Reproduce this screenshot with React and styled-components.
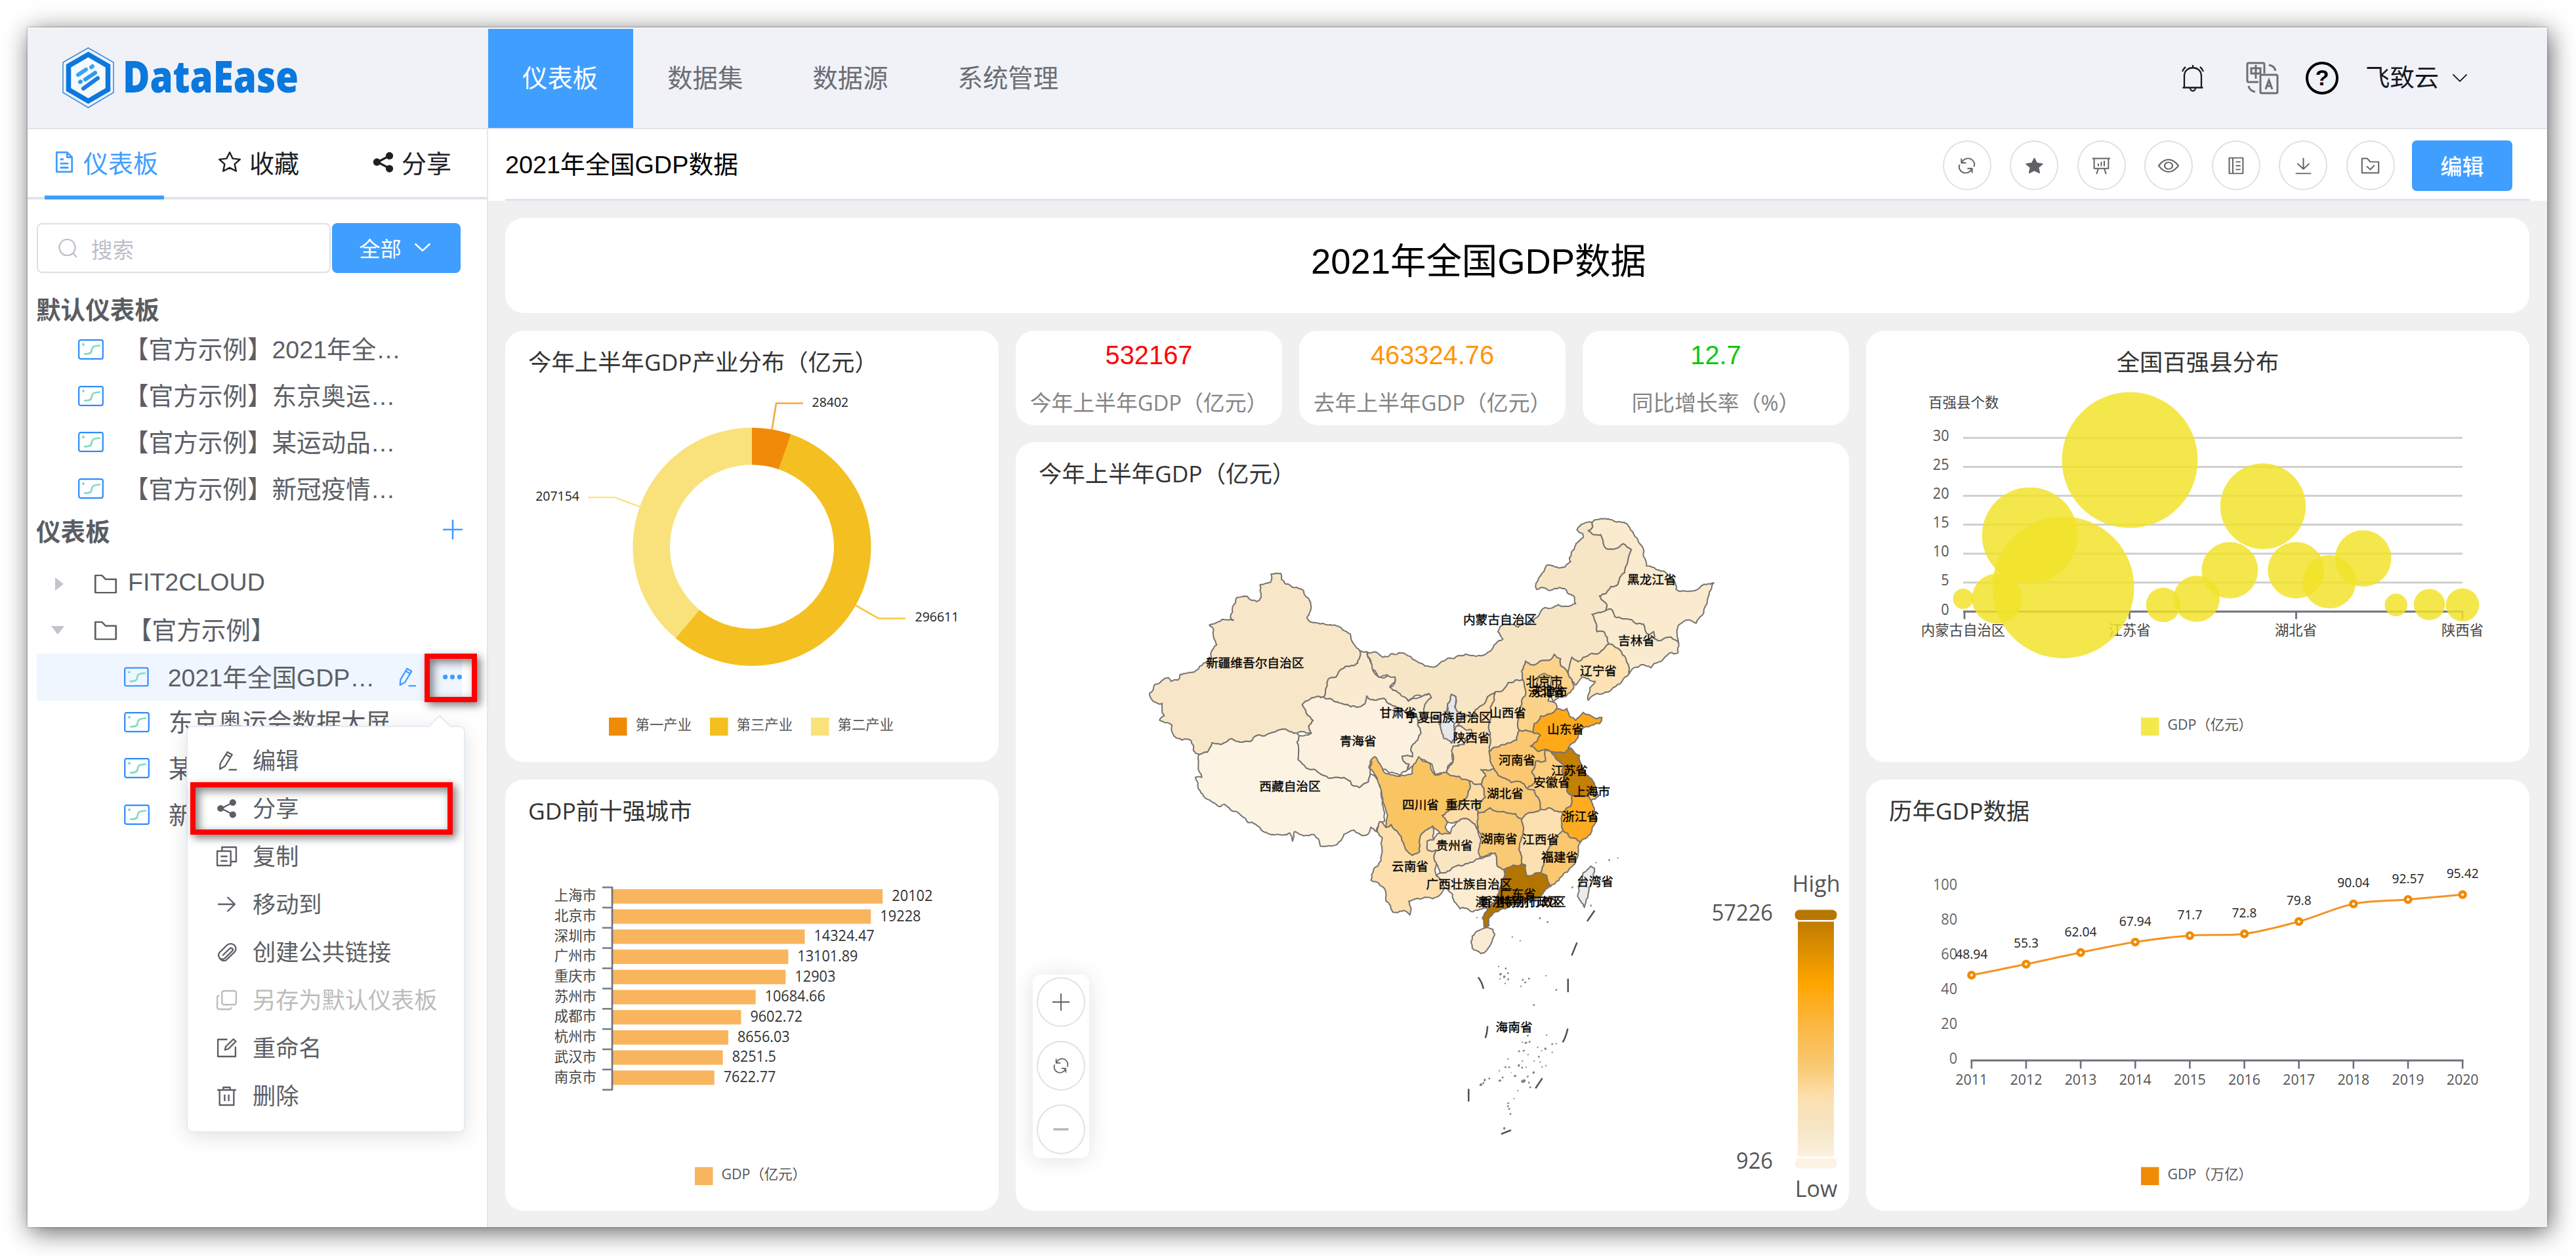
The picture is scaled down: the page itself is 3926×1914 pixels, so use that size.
import React from "react";
import styled, { createGlobalStyle, css } from "styled-components";

const UI_FONT = '"Liberation Sans", "Noto Sans CJK SC", sans-serif';
const CHART_FONT = '"Open Sans", "Noto Sans CJK SC", sans-serif';
const BLUE = "#409eff";

const GlobalStyle = createGlobalStyle`
  * { box-sizing: border-box; }
  body { margin: 0; background: #fff; font-family: ${UI_FONT}; color: #606266; }
`;

/* ---------- page frame ---------- */

const Page = styled.div`
  width: 3926px;
  height: 1914px;
  padding: 42px 44px 44px 42px;
  overflow: hidden;
  background: #fff;
`;

const Window = styled.div`
  position: relative;
  width: 3840px;
  height: 1828px;
  display: flex;
  flex-direction: column;
  background: #fff;
  box-shadow: 4px 7px 36px rgba(0, 0, 0, 0.62), 0 0 3px rgba(0, 0, 0, 0.35);
`;

const Header = styled.header`
  height: 155px;
  flex: none;
  display: flex;
  background: #f0f2f8;
  border-top: 2px solid #f7f8fb;
  border-bottom: 2px solid #e2e4e9;
`;

const Brand = styled.div`
  width: 702px;
  padding: 28px 0 0 53px;
`;

const Nav = styled.nav`
  display: flex;
  flex: 1;
`;

const NavItem = styled.a`
  padding: 0 54px 7px 52px;
  display: flex;
  align-items: center;
  font-size: 38.4px;
  color: ${(p) => (p.$active ? "#fff" : "#6b6e74")};
  background: ${(p) => (p.$active ? BLUE : "transparent")};
`;

const HeaderTools = styled.div`
  display: flex;
  align-items: center;
  padding: 0 120px 2px 0;
  color: #111;
`;

const UserName = styled.span`
  font-size: 37.3px;
  margin: 0 19px 5px 41px;
  color: #15181d;
`;

const Body = styled.div`
  flex: 1;
  display: flex;
  min-height: 0;
`;

/* ---------- sidebar ---------- */

const Sidebar = styled.aside`
  width: 702px;
  flex: none;
  border-right: 2px solid #e4e6ea;
  display: flex;
  flex-direction: column;
`;

const Tabs = styled.div`
  height: 107px;
  flex: none;
  display: flex;
  padding-left: 26px;
  border-bottom: 4px solid #dfe4ed;
`;

const Tab = styled.div`
  display: flex;
  align-items: center;
  gap: ${(p) => p.$gap}px;
  height: 107px;
  padding: 0 0 8px ${(p) => (p.$active ? 13 : 0)}px;
  width: ${(p) => p.$w}px;
  margin-left: ${(p) => p.$ml || 0}px;
  font-size: 38px;
  white-space: nowrap;
  color: ${(p) => (p.$active ? BLUE : "#1d2025")};
  ${(p) => p.$active && css`border-bottom: 6px solid ${BLUE}; padding-bottom: 2px;`}
`;

const SearchRow = styled.div`
  display: flex;
  gap: 2px;
  padding: 36px 0 0 14px;
`;

const SearchBox = styled.div`
  width: 448px;
  height: 76px;
  border: 2px solid #dcdfe6;
  border-radius: 8px;
  display: flex;
  align-items: center;
  gap: 20px;
  padding-left: 30px;
  font-size: 32.5px;
  color: #bcc0c9;
`;

const FilterButton = styled.button`
  width: 196px;
  height: 76px;
  border: 0;
  border-radius: 8px;
  background: ${BLUE};
  color: #fff;
  display: flex;
  align-items: center;
  justify-content: center;
  gap: 18px;
  padding: 0 9px 2px 6px;
  font: 400 32.3px ${UI_FONT};
`;

const GroupTitle = styled.div`
  height: ${(p) => p.$h}px;
  margin-top: ${(p) => p.$mt}px;
  padding: 0 36px 0 13px;
  display: flex;
  align-items: center;
  justify-content: space-between;
  font-size: 37.6px;
  font-weight: 700;
  color: #5a5d62;
  svg { color: ${BLUE}; }
`;

const Tree = styled.div`
  margin-top: ${(p) => p.$mt || 0}px;
`;

const Row = styled.div`
  height: ${(p) => (p.$selected ? 72 : 70.8)}px;
  margin-left: 14px;
  margin-bottom: ${(p) => (p.$selected ? -3 : 0)}px;
  width: 648px;
  padding-left: ${(p) => p.$indent}px;
  display: flex;
  align-items: center;
  font-size: 37.6px;
  color: #5c5f65;
  white-space: nowrap;
  background: ${(p) => (p.$selected ? "#eff6ff" : "transparent")};
`;

const CaretSlot = styled.span`
  display: flex;
  width: ${(p) => p.$w}px;
`;

const RowText = styled.span`
  margin-left: ${(p) => p.$gap}px;
  padding-bottom: 5px;
`;

const RowTools = styled.span`
  margin-left: 33px;
  display: flex;
  align-items: center;
  gap: 40px;
  color: ${BLUE};
`;

/* ---------- dropdown menu over the tree ---------- */

const Menu = styled.div`
  position: absolute;
  left: 242px;
  top: 1064px;
  width: 425px;
  height: 620px;
  padding-top: 14px;
  background: #fff;
  border: 2px solid #e4ebf5;
  border-radius: 9px;
  box-shadow: 0 6px 32px rgba(0, 0, 0, 0.12);
  &::before {
    content: "";
    position: absolute;
    top: -14px;
    left: 372px;
    width: 22px;
    height: 22px;
    background: #fff;
    border: 2px solid #e4ebf5;
    border-right: 0;
    border-bottom: 0;
    transform: rotate(45deg);
  }
`;

const MenuItem = styled.div`
  position: relative;
  height: 73px;
  padding-left: 43px;
  display: flex;
  align-items: center;
  gap: 23px;
  font-size: 35.2px;
  color: ${(p) => (p.$disabled ? "#bcbcbc" : "#5c5f65")};
  span { padding-bottom: 5px; }
`;

const Marker = styled.div`
  position: absolute;
  left: ${(p) => p.$x}px;
  top: ${(p) => p.$y}px;
  width: ${(p) => p.$w}px;
  height: ${(p) => p.$h}px;
  border: 8px solid #fe0000;
  box-shadow: 5px 5px 12px rgba(0, 0, 0, 0.5), inset 5px 5px 14px rgba(0, 0, 0, 0.5);
`;

/* ---------- main area ---------- */

const Main = styled.main`
  flex: 1;
  display: flex;
  flex-direction: column;
  background: #f0f0f0;
`;

const Toolbar = styled.div`
  height: 109px;
  flex: none;
  background: #fff;
  padding: 0 26px;
`;

const ToolbarInner = styled.div`
  height: 109px;
  border-bottom: 3px solid #dfe4ed;
  display: flex;
  align-items: center;
  justify-content: space-between;
  padding: 4px 27px 0 0;
`;

const PageName = styled.span`
  font-size: 37.8px;
  color: #000;
  padding-bottom: 9px;
`;

const ToolButtons = styled.div`
  display: flex;
  align-items: center;
  gap: 28.5px;
`;

const RoundButton = styled.button`
  width: 74px;
  height: 76px;
  padding: 0;
  border: 2px solid #dfe1e8;
  border-radius: 50%;
  background: #fff;
  display: flex;
  align-items: center;
  justify-content: center;
  color: ${(p) => (p.$light ? "#b5b7bb" : "#606266")};
`;

const EditButton = styled.button`
  width: 153px;
  height: 77px;
  margin-left: -2px;
  border: 0;
  border-radius: 7px;
  background: ${BLUE};
  color: #fff;
  font: 500 33px ${UI_FONT};
`;

const Board = styled.div`
  flex: 1;
  padding: 26px 27px 26px 26px;
  display: flex;
  flex-direction: column;
  gap: 27px;
`;

const cardLook = css`
  background: #fff;
  border-radius: 28px;
`;

const TitleCard = styled.div`
  ${cardLook}
  height: 145px;
  padding: 0 118px 23px 0;
  display: flex;
  align-items: center;
  justify-content: center;
  font-size: 54.4px;
  color: #000;
`;

const Columns = styled.div`
  flex: 1;
  display: grid;
  grid-template-columns: 752px 1270px 1011px;
  gap: 26px;
`;

const Column = styled.div`
  display: flex;
  flex-direction: column;
  gap: ${(p) => p.$gap || 27}px;
`;

const Card = styled.section`
  ${cardLook}
  position: relative;
  flex: 1;
  display: flex;
  flex-direction: column;
  overflow: hidden;
  svg { display: block; }
`;

const CardTitle = styled.h3`
  margin: 0;
  height: 90px;
  flex: none;
  padding: 0 35px;
  font: 400 35.4px/94px ${CHART_FONT};
  color: #333;
  text-align: ${(p) => (p.$center ? "center" : "left")};
`;

const KpiRow = styled.div`
  display: grid;
  grid-template-columns: repeat(3, 406px);
  gap: 26px;
`;

const Kpi = styled.div`
  ${cardLook}
  height: 144px;
  display: flex;
  flex-direction: column;
  align-items: center;
`;

const KpiValue = styled.div`
  margin-top: 14px;
  font-size: 39.8px;
  line-height: 46px;
  color: ${(p) => p.$color};
`;

const KpiLabel = styled.div`
  margin-top: 24px;
  font: 400 32.8px/52px ${CHART_FONT};
  color: #858585;
`;

const ZoomPanel = styled.div`
  position: absolute;
  left: 26px;
  top: 811px;
  width: 86px;
  height: 280px;
  border-radius: 13px;
  background: #fff;
  box-shadow: 0 2px 34px rgba(0, 0, 0, 0.12);
  display: flex;
  flex-direction: column;
  align-items: center;
  justify-content: space-between;
  padding: 4px 0 6px;
`;

/* ---------- icons ---------- */

const ICONS = {
  doc: <path d="M5 2h15l7 7v21H5zM20 2v7h7M10 12h5M10 18h12M10 24h12" />,
  star: <path d="M16 2l4.200 9 9.800 1.200-7.200 6.800 1.900 9.900L16 24.100 7.300 28.900l1.900-9.900L2 12.200 11.800 11z" />,
  starFill: <path fill="currentColor" d="M16 3l4 8.600 9.400 1.200-6.900 6.500 1.800 9.400L16 24.100 7.700 28.700l1.800-9.400-6.900-6.500L12 11.600z" />,
  share: (
    <g>
      <path d="M8 16L25 7M8 16l17 9" />
      <circle cx="25" cy="7" r="3.800" fill="currentColor" />
      <circle cx="25" cy="25.500" r="3.800" fill="currentColor" />
      <circle cx="7" cy="16" r="3.800" fill="currentColor" />
    </g>
  ),
  search: <path d="M15 2a12.500 12.500 0 1 0 .01 0M24.500 23.500L29.500 30" />,
  down: <path d="M3 9l13 13L29 9" />,
  plus: <path d="M16 1v30M1 16h30" />,
  minus: <path d="M3 16h26" />,
  folder: <path d="M2 3h9l5 6h14v21H2z" />,
  pencil: <path d="M6.500 20.500L17 3l7 4-10.500 17.500L6 29zM15 7l7 4M19 30h12" />,
  dots: (
    <g fill="currentColor" stroke="none">
      <circle cx="4" cy="16" r="4" /><circle cx="16" cy="16" r="4" /><circle cx="28" cy="16" r="4" />
    </g>
  ),
  copy: <path d="M2 8h20v22H2zM9 8V2h21v22h-8M7 16h10M7 23h10" />,
  right: <path d="M3 16h25M17 5l11 11-11 11" />,
  clip: <path d="M10 21L20.500 10.500a2.600 2.600 0 0 1 3.700 3.700L13.500 25a5.600 5.600 0 0 1-7.900 0M5.600 25a6.500 6.500 0 0 1 0-8.800L16.500 5.300a7.600 7.600 0 0 1 10.800 10.800L15 28.300a6.800 6.800 0 0 1-9.400-3.300M10 21a2 2 0 0 0 0 .1" />,
  copies: <path d="M12 2h15a3 3 0 0 1 3 3v15a3 3 0 0 1-3 3H12a3 3 0 0 1-3-3V5a3 3 0 0 1 3-3zM5 9a3 3 0 0 0-3 3v15a3 3 0 0 0 3 3h15a3 3 0 0 0 3-3" />,
  rename: <path d="M17 3H3v26h26V14M13.500 19l1-5L26 2.500l3.500 3.500L18.500 17.500z" />,
  trash: <path d="M2 7h28M11 7V3h10v4M5.500 7v23h21V7M13 14v10M19 14v10" />,
  refresh: <path d="M8 9.500A10.500 10.500 0 0 1 28 18M7 3v8h8M24 22.500A10.500 10.500 0 0 1 4 14M25 29v-8h-8" />,
  board: <path d="M1 3h30M4 3v18h24V3M11 21L8 31M21 21l3 10M11 12v5M16 9v8M21 7v10" />,
  eye: (
    <g>
      <path d="M1 16C6 8 11 5 16 5s10 3 15 11c-5 8-10 11-15 11S6 24 1 16z" />
      <circle cx="16" cy="16" r="6" />
    </g>
  ),
  notebook: <path d="M5 2h23v28H5zM11 2v28M16 9h8M16 16h8M16 23h8" />,
  download: <path d="M16 2v20M6 12l10 10 10-10M3 30h26" />,
  folderCheck: <path d="M2 3h9l5 6h14v20H2zM10 17l6 6 7-8" />,
};

const Icon = ({ name, size = 30, h, sw = 2.2 }) => (
  <svg width={size} height={h || size} viewBox="0 0 32 32" preserveAspectRatio="none" fill="none"
    stroke="currentColor" strokeWidth={sw} strokeLinejoin="round" flex="none">
    {ICONS[name]}
  </svg>
);

const PanelIcon = () => (
  <svg width="39" height="31" viewBox="0 0 39 31" fill="none">
    <rect x="1.200" y="1.200" width="36.600" height="28.600" rx="2.500" stroke="#2f8bfa" strokeWidth="2.200" />
    <circle cx="8" cy="8" r="1.900" fill="#73dcbc" />
    <path d="M9 22.500c5 0 11 0 11.500-4.500C21 12 22 10 34 9.500" stroke="#7fdcc2" strokeWidth="2.600" />
  </svg>
);

const Caret = ({ open }) => (
  <svg width="22" height="22" viewBox="0 0 22 22">
    <path d={open ? "M1 5h20L11 18z" : "M5 1v20l13-10z"} fill="#c0c4cc" />
  </svg>
);

const BellIcon = () => (
  <svg width="36" height="44" viewBox="0 0 36 44" fill="none" stroke="#15181d" strokeWidth="2.300">
    <path d="M5 36V19C5 2 31 2 31 19v17M2.500 36.500h31M14 37c0 6 8 6 8 0M18 2v4M7 5c-2.500 2-4 4-5 7M29 5c2.500 2 4 4 5 7" />
  </svg>
);

const LangIcon = () => (
  <svg width="50" height="50" viewBox="0 0 50 50" fill="none" stroke="#6b6f75" strokeWidth="3">
    <path d="M19 31H4a2 2 0 0 1-2-2V4a2 2 0 0 1 2-2h22a2 2 0 0 1 2 2v14" />
    <rect x="22" y="20" width="26" height="28" rx="2" />
    <path d="M8 10h14v8H8zM15 5v21M30 42l5-14 5 14M32 37h7M35 5c6 1 9 4 10 9M14 46c-6-1-9-4-10-9" />
  </svg>
);

const HelpMark = styled.span`
  width: 50px;
  height: 50px;
  margin-left: 41px;
  border: 4px solid #000;
  border-radius: 50%;
  color: #000;
  font: 700 34px/41px ${UI_FONT};
  text-align: center;
`;

const BellSlot = styled.span`
  display: flex;
  margin-right: 63px;
`;

const Logo = () => (
  <svg width="370" height="96" viewBox="0 0 370 96" overflow="visible">
    <path d="M39.500 1L78 23v46L39.500 92 1 69V23z" fill="none" stroke="#3f8fdd" strokeWidth="1.600" />
    <path d="M39.500 11L69.500 28.500v36L39.500 82 9.500 64.500v-36z" fill="#f6f9fe" stroke="#0a78dd" strokeWidth="7.500" />
    <g strokeLinecap="round" strokeWidth="6">
      <path d="M24 42l12-8M44 30.500l2-1.500" stroke="#35a7f5" />
      <path d="M35 49l15-10" stroke="#2e9bf0" />
      <path d="M27 53l1-.7" stroke="#2e9bf0" />
      <path d="M32 63l22-16" stroke="#1680e0" />
    </g>
    <text x="92" y="69" textLength="268" lengthAdjust="spacingAndGlyphs" fontFamily='"Open Sans", sans-serif'
      fontWeight="800" fontSize="67" fill="#0a78dd">DataEase</text>
  </svg>
);

/* ---------- chart helpers ---------- */

const CjkText = ({ x, y, size = 21.4, anchor = "middle", fill = "#444", stroke, children }) => (
  <text x={x} y={y + size * 0.36} fontSize={size} textAnchor={anchor} fill={fill} stroke={stroke} strokeWidth="0.35"
    fontFamily={CHART_FONT}>{children}</text>
);

const numWidth = (s, size) => [...s].reduce((a, c) => a + (c === "." ? 0.217 : 0.541), 0) * size;

const NumText = ({ x, y, size = 22.6, anchor = "middle", fill = "#444", children }) => {
  const s = String(children);
  return (
    <text x={x} y={y + size * 0.34} fontSize={size} textAnchor={anchor} fill={fill} fontFamily={CHART_FONT}
      textLength={numWidth(s, size)} lengthAdjust="spacingAndGlyphs">{s}</text>
  );
};

const Legend = ({ x, y, color, label }) => (
  <g>
    <rect x={x} y={y - 13.5} width="27.500" height="27.500" fill={color} />
    <CjkText x={x + 40.500} y={y - 2.500} size={21.4} anchor="start" fill="#555">{label}</CjkText>
  </g>
);

/* ---------- donut ---------- */

const arc = (a0, a1, R = 181.5, r = 125, cx = 1146, cy = 832.7) => {
  const p = (a, q) => `${cx + q * Math.sin(a)} ${cy - q * Math.cos(a)}`;
  const big = a1 - a0 > Math.PI ? 1 : 0;
  return `M${p(a0, R)}A${R} ${R} 0 ${big} 1 ${p(a1, R)}L${p(a1, r)}A${r} ${r} 0 ${big} 0 ${p(a0, r)}Z`;
};

const Donut = () => {
  const parts = [[28402, "#f08b07"], [296611, "#f4bf20"], [207154, "#f9e27c"]];
  const total = 532167;
  let a = 0;
  return (
    <svg width="752" height="567" viewBox="770 593.500 752 567">
      {parts.map(([v, c]) => {
        const from = a;
        a += (v / total) * Math.PI * 2;
        return <path key={v} d={arc(from, a)} fill={c} />;
      })}
      <g fill="none" strokeWidth="2.600">
        <path d="M1176.500 654L1183 614H1224" stroke="#f5a843" />
        <path d="M896 757.500H937L976 772" stroke="#fbe58a" />
        <path d="M1304 922L1339 942H1380" stroke="#f6c93f" />
      </g>
      <NumText x={1237.5} y={612.5} size={20.6} anchor="start" fill="#222">28402</NumText>
      <NumText x={883} y={755.5} size={20.6} anchor="end" fill="#222">207154</NumText>
      <NumText x={1394.5} y={939.5} size={20.6} anchor="start" fill="#222">296611</NumText>
      <Legend x={928} y={1106.5} color="#f08b07" label="第一产业" />
      <Legend x={1082} y={1106.5} color="#f4bf20" label="第三产业" />
      <Legend x={1236} y={1106.5} color="#f9e27c" label="第二产业" />
    </svg>
  );
};

/* ---------- city bars ---------- */

const CITIES = [
  ["上海市", "20102"], ["北京市", "19228"], ["深圳市", "14324.47"], ["广州市", "13101.89"], ["重庆市", "12903"],
  ["苏州市", "10684.66"], ["成都市", "9602.72"], ["杭州市", "8656.03"], ["武汉市", "8251.5"], ["南京市", "7622.77"],
];

const CityBars = () => (
  <svg width="752" height="567" viewBox="770 1277 752 567">
    {CITIES.map(([name, v], i) => {
      const y = 1365 + i * 30.7;
      const w = v * 0.02056;
      return (
        <g key={name}>
          <CjkText x={909} y={y - 1.5} size={21.4} anchor="end">{name}</CjkText>
          <rect x="932" y={y - 11} width={w} height="22" fill="#f9b55d" />
          <NumText x={932 + w + 14} y={y - 1} size={23} anchor="start" fill="#333">{v}</NumText>
        </g>
      );
    })}
    <path d="M933 1350V1660.500" stroke="#6e7079" strokeWidth="2.600" />
    {Array.from({ length: 11 }, (_, i) => (
      <path key={i} d={`M918 ${1351.2 + i * 30.85}H933`} stroke="#7b7d86" strokeWidth="2.600" />
    ))}
    <Legend x={1059} y={1791} color="#f9b55d" label="GDP（亿元）" />
  </svg>
);

/* ---------- bubbles ---------- */

const BUBBLES = [
  [2992, 912, 15.5], [3043.6, 911.7, 38.2], [3093.7, 815.2, 73], [3144.5, 894.7, 108], [3246, 700.6, 103.5],
  [3297, 921.3, 26.3], [3347.6, 912, 35.3], [3398.4, 868.5, 43], [3449, 771, 65.2], [3499.3, 868.5, 43],
  [3550, 886, 40.6], [3601.6, 850.6, 43], [3651.7, 921.3, 17.2], [3702.5, 920.8, 23.8], [3753, 921.3, 25.3],
];

const Bubbles = () => (
  <svg width="1011" height="567" viewBox="2844 593.500 1011 567">
    <CjkText x={2939} y={612.5} anchor="start" size={21.5}>百强县个数</CjkText>
    {[30, 25, 20, 15, 10, 5, 0].map((v) => {
      const y = 931.3 - v * 8.815;
      return (
        <g key={v}>
          {v > 0 && <path d={`M2992 ${y}H3753`} stroke="#cfcfcf" strokeWidth="3" />}
          <NumText x={2970.5} y={y - 3} anchor="end" size={22.8} fill="#555">{v}</NumText>
        </g>
      );
    })}
    <path d="M2992 931.500H3754M2994 931V943M3245.500 931V943M3499.500 931V943M3753 931V943" stroke="#6e7079" strokeWidth="2.800" fill="none" />
    <CjkText x={2992} y={959.5}>内蒙古自治区</CjkText>
    <CjkText x={3245.5} y={959.5}>江苏省</CjkText>
    <CjkText x={3499} y={959.5}>湖北省</CjkText>
    <CjkText x={3753} y={959.5}>陕西省</CjkText>
    {BUBBLES.map(([x, y, r]) => <circle key={x} cx={x} cy={y} r={r} fill="#f2e228" fillOpacity="0.83" />)}
    <Legend x={3263} y={1106.5} color="#f4e84d" label="GDP（亿元）" />
  </svg>
);

/* ---------- yearly line ---------- */

const YEARS = [
  [2011, "48.94", 1485], [2012, "55.3", 1468.3], [2013, "62.04", 1450.5], [2014, "67.94", 1434.6], [2015, "71.7", 1424.7],
  [2016, "72.8", 1422], [2017, "79.8", 1403.3], [2018, "90.04", 1376.4], [2019, "92.57", 1369.7], [2020, "95.42", 1362.3],
];

const yearX = (i) => 3004.8 + i * 83.15;

const smooth = (pts) => {
  const slope = (i) => {
    const a = pts[Math.max(0, i - 1)];
    const b = pts[Math.min(pts.length - 1, i + 1)];
    return (b[1] - a[1]) / (b[0] - a[0]);
  };
  return pts.reduce((d, [x, y], i) => {
    if (!i) return `M${x} ${y}`;
    const [px, py] = pts[i - 1];
    const k = (x - px) * 0.32;
    return `${d}C${px + k} ${py + slope(i - 1) * k} ${x - k} ${y - slope(i) * k} ${x} ${y}`;
  }, "");
};

const YearLine = () => (
  <svg width="1011" height="567" viewBox="2844 1277 1011 567">
    {[0, 20, 40, 60, 80, 100].map((v) => (
      <NumText key={v} x={2983} y={1612.5 - v * 2.65} anchor="end" size={22.8} fill="#666">{v}</NumText>
    ))}
    <path d="M3003.500 1615H3754.500" stroke="#6e7079" strokeWidth="2.800" />
    <path d={smooth(YEARS.map(([, , y], i) => [yearX(i), y]))} stroke="#f39423" strokeWidth="3" fill="none" />
    {YEARS.map(([year, v, y], i) => (
      <g key={year}>
        <path d={`M${yearX(i)} 1615V1627.500`} stroke="#6e7079" strokeWidth="2.600" />
        <NumText x={yearX(i)} y={1644} size={22.6} fill="#555">{year}</NumText>
        <circle cx={yearX(i)} cy={y} r="4.400" fill="#fff" stroke="#f08b07" strokeWidth="4.600" />
        <NumText x={yearX(i)} y={y - 32} size={20.6} fill="#222">{v}</NumText>
      </g>
    ))}
    <Legend x={3263} y={1791} color="#f08b07" label="GDP（万亿）" />
  </svg>
);

/* ---------- map ---------- */

/* Outlines of the western regions, in a local grid of 1568 units. */
const WEST = [
  ["#f7e6c8", "600,256 638,254 640,274 680,300 725,312 752,352 750,385 738,405 755,420 845,430 905,460 942,518 934,560 885,572 850,608 820,615 815,640 803,676 720,702 735,730 762,756 745,775 755,800 700,800 650,786 585,803 520,828 480,830 448,818 415,834 372,832 355,864 322,872 300,858 292,825 225,808 218,772 170,755 188,740 180,698 148,692 132,662 152,632 205,610 215,622 240,618 250,598 275,595 340,560 370,540 368,525 390,498 378,470 378,445 362,430 430,412 455,414 443,402 468,336 545,350 562,335 558,292 598,284"],
  ["#fcf3e3", "322,872 355,864 372,832 415,834 448,818 480,830 520,828 585,803 650,786 700,800 708,808 700,830 706,850 704,890 735,918 790,938 855,950 880,950 905,962 910,975 940,985 975,965 982,938 1003,950 1025,990 1032,1050 1038,1100 1025,1105 1005,1135 985,1120 972,1145 920,1130 880,1145 845,1182 790,1185 785,1165 765,1145 690,1135 682,1168 672,1140 620,1145 570,1135 540,1110 490,1085 420,1042 405,1050 340,1015 320,990 308,950 333,950 320,910 318,885"],
  ["#fcf1df", "720,702 803,676 855,692 880,700 935,710 960,700 968,672 1010,685 1035,680 1060,700 1100,715 1160,740 1165,770 1178,798 1150,835 1138,855 1145,880 1105,878 1110,895 1132,905 1120,930 1095,943 1055,935 1022,918 1000,884 982,895 982,938 975,965 940,985 910,975 905,962 880,950 855,950 790,938 735,918 704,890 706,850 700,830 708,808 755,800 745,775 762,756 735,730"],
  ["#faebd0", "942,518 970,522 990,570 992,585 1015,608 1060,600 1078,602 1078,625 1058,640 1095,660 1130,690 1150,680 1190,670 1215,662 1215,680 1190,720 1195,745 1250,745 1258,790 1268,815 1298,832 1312,775 1370,780 1375,800 1340,840 1305,845 1297,870 1302,895 1282,910 1275,938 1232,940 1220,905 1190,890 1170,882 1158,910 1125,925 1132,905 1110,895 1105,878 1145,880 1138,855 1150,835 1178,798 1165,770 1160,740 1100,715 1060,700 1035,680 1010,685 968,672 960,700 935,710 880,700 855,692 803,676 815,640 820,615 850,608 885,572 934,560"],
];

const EAST = [
  ["#f6e6c6", "9,507 135,510 185,525 225,545 290,552 380,520 465,520 500,505 550,465 530,440 545,420 610,425 680,395 720,360 770,350 840,347 835,325 800,300 775,293 740,303 715,295 685,300 680,290 722,222 770,228 820,208 815,195 870,128 868,115 845,102 870,82 905,78 908,92 890,105 905,115 940,118 955,158 1015,158 1030,148 1062,168 1048,205 1035,245 1010,280 980,290 935,322 965,355 960,370 905,382 920,410 925,440 955,442 972,480 940,505 850,540 825,525 815,555 810,580 800,565 782,555 780,530 755,515 735,535 660,550 640,538 625,570 630,600 570,610 550,635 520,640 490,655 440,700 435,720 375,722 360,690 362,655 345,648 330,680 320,715 240,725 235,695 265,660 255,645 195,655 175,670 150,655 100,625 120,610 120,590 58,592 30,565 28,548"],
  ["#faebcf", "905,78 965,67 1010,75 1050,90 1082,128 1110,190 1122,222 1200,245 1240,300 1305,305 1340,288 1390,278 1370,320 1345,385 1320,412 1280,402 1248,420 1250,478 1220,458 1180,470 1155,465 1150,440 1130,450 1110,415 1060,400 1030,398 995,390 980,365 960,370 965,355 935,322 980,290 1010,280 1035,245 1048,205 1062,168 1030,148 1015,158 955,158 940,118 905,115 890,105 908,92"],
  ["#faebd0", "905,382 960,370 980,365 995,390 1030,398 1060,400 1110,415 1130,450 1150,440 1155,465 1180,470 1220,458 1250,478 1248,510 1215,510 1170,540 1140,560 1100,550 1052,580 1040,530 1015,500 985,482 972,480 955,442 925,440 920,410"],
  ["#fde2b4", "985,482 1015,500 1040,530 1052,580 990,625 925,645 890,668 888,655 918,605 890,595 868,590 840,618 825,600 810,580 815,555 825,525 850,540 940,505 972,480"],
  ["#fbd388", "640,538 660,550 735,535 755,515 780,530 782,555 800,565 810,580 825,600 833,625 800,655 765,660 735,650 730,670 762,680 765,695 700,720 675,745 670,775 615,768 612,730 620,690 640,650 635,620 630,600 625,570"],
  ["#fad080", "690,590 720,580 745,590 740,620 710,635 685,620"],
  ["#fbe4ba", "740,620 765,635 770,660 750,672 735,650"],
  ["#fde3ba", "520,640 550,635 570,610 630,600 635,620 640,650 620,690 612,730 615,768 605,800 560,815 495,838 500,780 498,735 500,690"],
  ["#fddfae", "520,640 500,690 498,735 500,780 495,838 515,895 462,898 482,920 465,948 415,935 375,920 325,908 335,890 352,870 345,835 352,820 395,815 430,790 425,765 370,752 385,725 435,720 440,700 490,655"],
  ["#e6e7ea", "345,648 362,655 358,690 380,710 385,725 355,750 362,785 345,810 315,795 302,745 295,720 325,712 330,680"],
  ["#fbc871", "495,838 560,815 605,800 615,768 670,775 700,785 660,820 690,838 720,830 720,870 680,870 665,905 680,930 645,960 620,938 550,925 515,895"],
  ["#fbce80", "720,830 760,860 790,880 785,905 800,940 805,970 825,985 820,1020 790,1040 755,1035 730,1025 700,1030 690,990 675,965 645,960 680,930 665,905 680,870 720,870"],
  ["#c47f05", "720,830 760,840 800,840 815,825 855,850 870,895 905,930 920,955 890,985 850,985 825,985 805,970 800,940 785,905 790,880 760,860"],
  ["#fda91a", "765,695 805,695 815,720 840,735 870,708 945,725 935,745 880,755 850,790 835,808 800,840 760,840 720,830 690,838 660,820 700,785 670,775 675,745 700,720"],
  ["#faca76", "462,898 515,895 550,925 620,938 645,960 675,965 690,990 700,1030 660,1040 625,1062 600,1045 560,1040 500,1025 450,1045 440,1020 480,990 475,970 465,948 482,920"],
  ["#fddca6", "415,935 465,948 475,970 480,990 440,1020 450,1045 450,1100 430,1075 395,1060 370,1070 330,1072 308,1050 340,1030 385,1005 420,955"],
  ["#fae5c3", "340,1110 345,1095 370,1070 395,1060 430,1075 450,1100 460,1180 460,1190 430,1205 410,1210 375,1215 330,1235 300,1240 285,1210 275,1190 285,1165 250,1165 248,1135 275,1130 290,1110"],
  ["#fddfae", "60,1070 85,1090 105,1080 135,1110 165,1165 190,1182 218,1170 218,1130 240,1100 270,1085 275,1100 275,1130 248,1135 250,1165 285,1165 275,1190 285,1210 285,1250 320,1290 290,1320 210,1325 175,1335 180,1380 155,1365 110,1370 85,1335 80,1295 25,1265 35,1230 65,1200 70,1125 50,1105"],
  ["#f9c563", "20,895 25,865 40,855 60,878 75,905 110,915 140,920 190,910 195,880 215,855 230,870 262,880 278,915 325,908 375,920 415,935 420,955 385,1005 340,1030 308,1050 330,1072 320,1090 340,1110 300,1110 270,1085 240,1100 218,1130 218,1170 190,1182 165,1165 135,1110 105,1080 85,1090 75,1010 60,950 45,920"],
  ["#fbecd2", "285,1250 300,1240 330,1235 375,1215 410,1210 430,1205 490,1185 520,1175 530,1220 555,1230 545,1280 520,1330 490,1360 430,1370 380,1360 355,1335 350,1312 320,1290"],
  ["#f9c974", "450,1045 500,1025 560,1040 600,1045 625,1062 630,1115 625,1210 590,1215 555,1230 530,1220 520,1175 460,1190 455,1160 460,1110"],
  ["#fde0b0", "625,1062 660,1040 700,1030 730,1025 755,1035 790,1040 785,1080 790,1100 740,1150 715,1190 700,1240 645,1250 640,1215 625,1210 630,1115"],
  ["#fbc76f", "790,1100 820,1125 860,1138 850,1175 830,1215 780,1255 740,1285 725,1250 700,1240 715,1190 740,1150"],
  ["#fdab20", "825,985 850,985 890,985 915,1030 925,1060 905,1100 860,1138 820,1125 790,1100 785,1080 790,1040 820,1020"],
  ["#fbce80", "890,985 920,955 932,985 900,1000"],
  ["#b47400", "555,1230 590,1215 625,1210 640,1215 645,1250 700,1240 725,1250 740,1285 700,1320 620,1340 560,1360 520,1370 495,1390 495,1415 475,1420 468,1390 490,1360 520,1330 545,1280"],
  ["#fbebd3", "455,1432 510,1428 518,1445 500,1480 462,1508 428,1490 428,1450"],
  ["#ececec", "900,1218 915,1225 905,1270 875,1355 848,1320 850,1285 870,1240"],
];

/* Midpoint displacement; the seed does not depend on direction, so neighbours share the same border. */
const split = (a, b, out) => {
  const len = Math.hypot(b[0] - a[0], b[1] - a[1]);
  if (len < 11) { out.push(b); return; }
  const flip = a[0] > b[0] || (a[0] === b[0] && a[1] > b[1]);
  const [p, q] = flip ? [b, a] : [a, b];
  const n = Math.sin(p[0] * 12.99 + p[1] * 78.23 + q[0] * 37.7 + q[1] * 9.13) * 43758.5;
  const k = (n - Math.floor(n) - 0.5) * 0.3;
  const m = [(p[0] + q[0]) / 2 - (q[1] - p[1]) * k, (p[1] + q[1]) / 2 + (q[0] - p[0]) * k];
  split(a, m, out);
  split(m, b, out);
};

const coast = (src) => {
  const pts = src.split(" ").map((s) => s.split(",").map(Number));
  const out = [];
  pts.forEach((p, i) => split(p, pts[(i + 1) % pts.length], out));
  return out.map(([x, y]) => `${x.toFixed(1)},${y.toFixed(1)}`).join(" ");
};

const Regions = ({ list }) => list.map(([fill, pts], i) => (
  <polygon key={i} points={coast(pts)} fill={fill} stroke="#777370" strokeWidth="2" strokeLinejoin="round" vectorEffect="non-scaling-stroke" />
));

const NAMES = [
  ["内蒙古自治区", 2286, 943.5], ["黑龙江省", 2517.4, 883], ["吉林省", 2494, 975.8], ["辽宁省", 2436, 1021.7],
  ["北京市", 2353.6, 1038], ["天津市", 2361, 1053.5], ["河北省", 2357, 1053.5], ["山西省", 2298, 1086],
  ["甘肃省", 2130.5, 1086], ["宁夏回族自治区", 2207.4, 1092.5], ["陕西省", 2242.6, 1123.7], ["山东省", 2386, 1111],
  ["河南省", 2312, 1158], ["江苏省", 2392, 1173.5], ["安徽省", 2365, 1191.6], ["上海市", 2426, 1206],
  ["湖北省", 2294, 1208.6], ["四川省", 2165, 1226], ["重庆市", 2231, 1226], ["浙江省", 2409, 1244],
  ["湖南省", 2284.7, 1278], ["江西省", 2348, 1279], ["贵州省", 2216.6, 1288], ["福建省", 2377, 1305.5],
  ["云南省", 2149, 1320], ["广西壮族自治区", 2239, 1347], ["广东省", 2313, 1362], ["台湾省", 2431, 1343],
  ["澳门特别行政区", 2314, 1374], ["香港特别行政区", 2321, 1374], ["新疆维吾尔自治区", 1912.7, 1010],
  ["西藏自治区", 1966, 1197.5], ["青海省", 2069.7, 1128.7], ["海南省", 2307.6, 1565],
];

const ISLETS = [
  [523, 252, 4], [548, 267, 4], [434, 325, 3], [460, 340, 3], [390, 440, 3], [413, 448, 4], [396, 470, 5], [408, 480, 5], [420, 466, 4],
  [394, 488, 3], [421, 490, 4], [411, 506, 3], [468, 492, 4], [488, 487, 4], [476, 502, 4], [462, 517, 3], [543, 476, 3], [576, 531, 4],
  [504, 590, 4], [484, 709, 4], [545, 707, 3], [478, 737, 5], [490, 733, 4], [467, 735, 3], [563, 742, 4], [576, 740, 3], [541, 760, 5],
  [516, 754, 3], [456, 770, 4], [471, 768, 4], [485, 783, 3], [520, 791, 4], [529, 768, 3], [563, 774, 3], [420, 800, 3], [467, 808, 3],
  [505, 808, 3], [524, 812, 3], [455, 825, 5], [466, 834, 4], [479, 832, 3], [412, 832, 4], [424, 832, 4], [392, 846, 3], [543, 826, 3],
  [530, 831, 3], [503, 853, 5], [443, 866, 5], [484, 868, 4], [403, 872, 4], [394, 884, 5], [360, 876, 4], [345, 882, 5], [333, 900, 6],
  [341, 893, 4], [470, 886, 8], [431, 853, 2], [488, 892, 4], [492, 910, 4], [452, 923, 3], [440, 954, 3], [421, 972, 4], [420, 984, 4],
  [424, 994, 4], [428, 1014, 4], [408, 1070, 5], [704, 36, 3], [747, 26, 4], [775, 18, 3], [628, 132, 4], [688, 203, 4], [320, 250, 3],
];

const ChinaMap = () => (
  <svg width="1270" height="1080" viewBox="1548 763.500 1270 1080">
    <defs>
      <linearGradient id="scale" x1="0" y1="1" x2="0" y2="0">
        <stop offset="0" stopColor="#fbf1df" />
        <stop offset="0.12" stopColor="#f6e6c6" />
        <stop offset="0.25" stopColor="#fddfae" />
        <stop offset="0.38" stopColor="#f9c974" />
        <stop offset="0.55" stopColor="#fbb845" />
        <stop offset="0.74" stopColor="#ffa500" />
        <stop offset="1" stopColor="#bf7b00" />
      </linearGradient>
    </defs>
    <g transform="translate(1700 760) scale(.3954 .4464)"><Regions list={WEST} /></g>
    <g transform="translate(2080 760) scale(.3827 .4592)"><Regions list={EAST} /></g>
    <g transform="translate(2100 1300) scale(.4719 .3916)">
      <path fill="none" stroke="#4f4f4f" strokeWidth="2.500" vectorEffect="non-scaling-stroke"
        d="M700 222L676 264M643 347L626 397M614 488V540M613 682Q608 712 597 735M531 875L509 914M324 482Q336 500 341 527M354 672Q353 700 347 718M293 916V965M398 1092L430 1077" />
      {ISLETS.map(([x, y, r], i) => (
        <ellipse key={i} cx={x} cy={y} rx={r * 0.72} ry={r} fill="#857f7b" transform={`rotate(${(i * 37) % 60} ${x} ${y})`} />
      ))}
    </g>
    {NAMES.map(([n, x, y]) => <CjkText key={n} x={x} y={y} size={18.7} fill="#000" stroke="#000">{n}</CjkText>)}
    <CjkText x={2768} y={1346} size={34} fill="#555">High</CjkText>
    <NumText x={2702} y={1390.5} size={34.5} anchor="end" fill="#555">57226</NumText>
    <rect x="2735.500" y="1386" width="64" height="15.500" rx="7" fill="#b87700" />
    <rect x="2740" y="1404" width="55" height="358" fill="url(#scale)" />
    <rect x="2735.500" y="1764.500" width="64" height="15.500" rx="7" fill="#fcf3e4" />
    <NumText x={2702} y={1769} size={34.5} anchor="end" fill="#555">926</NumText>
    <CjkText x={2768} y={1811} size={34} fill="#555">Low</CjkText>
  </svg>
);

/* ---------- data ---------- */

const DEFAULT_BOARDS = ["【官方示例】2021年全…", "【官方示例】东京奥运…", "【官方示例】某运动品…", "【官方示例】新冠疫情…"];
const OTHER_BOARDS = ["东京奥运会数据大屏", "某", "新"];
const MENU = [
  ["pencil", "编辑"], ["share", "分享"], ["copy", "复制"], ["right", "移动到"],
  ["clip", "创建公共链接"], ["copies", "另存为默认仪表板", true], ["rename", "重命名"], ["trash", "删除"],
];
const KPIS = [
  ["532167", "今年上半年GDP（亿元）", "#fe0000"],
  ["463324.76", "去年上半年GDP（亿元）", "#ff9408"],
  ["12.7", "同比增长率（%）", "#0fc80f"],
];
const TOOLS = ["refresh", "starFill", "board", "eye", "notebook", "download", "folderCheck"];

export default function App() {
  return (
    <Page>
      <GlobalStyle />
      <Window>
        <Header>
          <Brand><Logo /></Brand>
          <Nav>
            <NavItem $active>仪表板</NavItem>
            <NavItem>数据集</NavItem>
            <NavItem>数据源</NavItem>
            <NavItem>系统管理</NavItem>
          </Nav>
          <HeaderTools>
            <BellSlot><BellIcon /></BellSlot>
            <LangIcon />
            <HelpMark>?</HelpMark>
            <UserName>飞致云</UserName>
            <Icon name="down" size={26} sw={2.2} />
          </HeaderTools>
        </Header>

        <Body>
          <Sidebar>
            <Tabs>
              <Tab $active $w={182} $gap={12}><Icon name="doc" size={34} h={34} sw={2.6} />仪表板</Tab>
              <Tab $w={125} $ml={82} $gap={12}><Icon name="star" size={36} h={34} />收藏</Tab>
              <Tab $w={125} $ml={110} $gap={11}><Icon name="share" size={34} h={34} sw={3} />分享</Tab>
            </Tabs>
            <SearchRow>
              <SearchBox><Icon name="search" size={31} sw={2.4} /><span>搜索</span></SearchBox>
              <FilterButton>全部<Icon name="down" size={28} h={26} sw={3} /></FilterButton>
            </SearchRow>
            <GroupTitle $h={53} $mt={27}>默认仪表板</GroupTitle>
            <Tree $mt={1}>
              {DEFAULT_BOARDS.map((t) => (
                <Row key={t} $indent={63}><PanelIcon /><RowText $gap={31}>{t}</RowText></Row>
              ))}
            </Tree>
            <GroupTitle $h={50} $mt={2}>仪表板<Icon name="plus" size={32} sw={2.6} /></GroupTitle>
            <Tree $mt={22}>
              <Row $indent={23}>
                <CaretSlot $w={64}><Caret /></CaretSlot>
                <Icon name="folder" size={36} h={31} sw={2.4} /><RowText $gap={16}>FIT2CLOUD</RowText>
              </Row>
              <Row $indent={21}>
                <CaretSlot $w={66}><Caret open /></CaretSlot>
                <Icon name="folder" size={36} h={31} sw={2.4} /><RowText $gap={15}>【官方示例】</RowText>
              </Row>
              <Row $selected $indent={133}>
                <PanelIcon /><RowText $gap={29}>2021年全国GDP…</RowText>
                <RowTools><Icon name="pencil" size={31} sw={2.4} /><Icon name="dots" size={29} /></RowTools>
              </Row>
              {OTHER_BOARDS.map((t) => (
                <Row key={t} $indent={133}><PanelIcon /><RowText $gap={29}>{t}</RowText></Row>
              ))}
            </Tree>
          </Sidebar>

          <Main>
            <Toolbar>
              <ToolbarInner>
                <PageName>2021年全国GDP数据</PageName>
                <ToolButtons>
                  {TOOLS.map((t) => <RoundButton key={t}><Icon name={t} size={t === "eye" ? 32 : 29} h={27} /></RoundButton>)}
                  <EditButton>编辑</EditButton>
                </ToolButtons>
              </ToolbarInner>
            </Toolbar>
            <Board>
              <TitleCard>2021年全国GDP数据</TitleCard>
              <Columns>
                <Column>
                  <Card><CardTitle>今年上半年GDP产业分布（亿元）</CardTitle><Donut /></Card>
                  <Card><CardTitle>GDP前十强城市</CardTitle><CityBars /></Card>
                </Column>
                <Column $gap={26}>
                  <KpiRow>
                    {KPIS.map(([v, label, color]) => (
                      <Kpi key={v}><KpiValue $color={color}>{v}</KpiValue><KpiLabel>{label}</KpiLabel></Kpi>
                    ))}
                  </KpiRow>
                  <Card>
                    <CardTitle>今年上半年GDP（亿元）</CardTitle>
                    <ChinaMap />
                    <ZoomPanel>
                      <RoundButton><Icon name="plus" size={28} /></RoundButton>
                      <RoundButton><Icon name="refresh" size={26} h={26} /></RoundButton>
                      <RoundButton $light><Icon name="minus" size={28} sw={4} /></RoundButton>
                    </ZoomPanel>
                  </Card>
                </Column>
                <Column>
                  <Card><CardTitle $center>全国百强县分布</CardTitle><Bubbles /></Card>
                  <Card><CardTitle>历年GDP数据</CardTitle><YearLine /></Card>
                </Column>
              </Columns>
            </Board>
          </Main>
        </Body>

        <Menu>
          {MENU.map(([icon, label, disabled]) => (
            <MenuItem key={label} $disabled={disabled}><Icon name={icon} size={33} h={32} sw={2.3} /><span>{label}</span></MenuItem>
          ))}
        </Menu>
        <Marker $x={605} $y={954} $w={80} $h={74} />
        <Marker $x={248} $y={1150} $w={400} $h={80} />
      </Window>
    </Page>
  );
}
